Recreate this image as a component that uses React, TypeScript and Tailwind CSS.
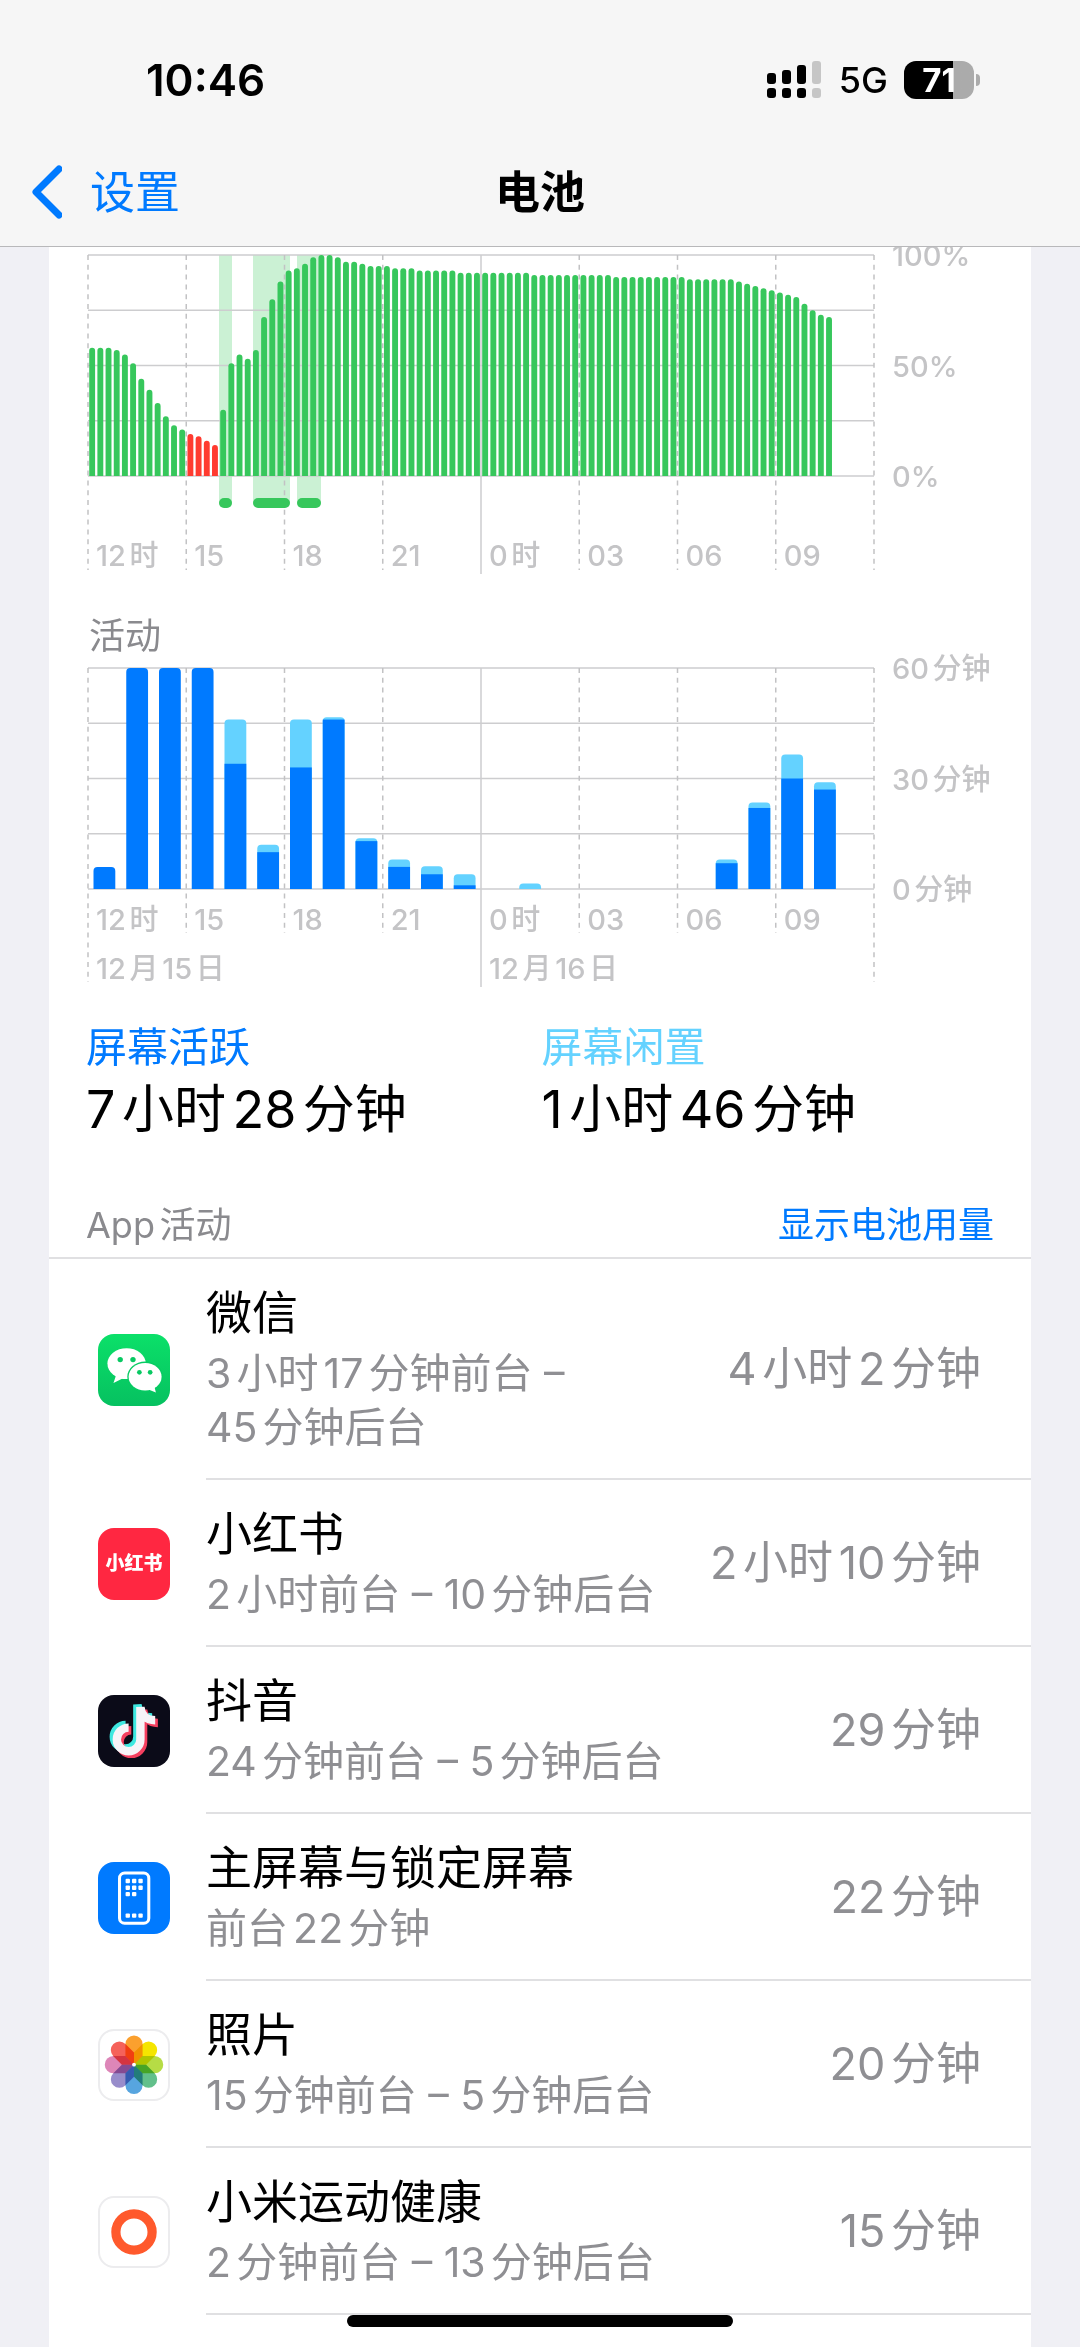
import type { ReactNode } from "react";

const batteryLevels = [
  58, 58, 58, 57, 55, 51, 44, 39, 33, 27, 23, 21, 19, 18, 16, 14, 30, 51, 55, 53, 57, 72, 80, 88,
  93, 94, 96, 99, 100, 100, 99, 97, 97, 96, 95, 95, 95, 94, 94, 94, 93, 93, 93, 93, 93, 92, 92, 92,
  92, 92, 92, 92, 92, 92, 91, 91, 91, 91, 91, 91, 91, 91, 91, 91, 90, 90, 90, 90, 90, 90, 90, 90,
  90, 89, 89, 89, 89, 89, 89, 88, 87, 86, 85, 84, 83, 82, 81, 78, 75, 73, 72
];

// start and width of each charging period, in chart units
const charging = [
  { x: 170, width: 13 },
  { x: 204, width: 37 },
  { x: 248, width: 24 }
];

// minutes per hour slot: total with the screen on, and the active part of it
const activity = [
  { hour: 0, total: 6, active: 6 },
  { hour: 1, total: 60, active: 60 },
  { hour: 2, total: 60, active: 60 },
  { hour: 3, total: 60, active: 60 },
  { hour: 4, total: 46, active: 34 },
  { hour: 5, total: 12, active: 10 },
  { hour: 6, total: 46, active: 33 },
  { hour: 7, total: 46.6, active: 46 },
  { hour: 8, total: 13.8, active: 13 },
  { hour: 9, total: 8, active: 6 },
  { hour: 10, total: 6.2, active: 4 },
  { hour: 11, total: 4, active: 1 },
  { hour: 13, total: 1.5, active: 0 },
  { hour: 19, total: 8, active: 7 },
  { hour: 20, total: 23.5, active: 22 },
  { hour: 21, total: 36.5, active: 30 },
  { hour: 22, total: 29, active: 27 }
];

const hourLabels = ["12时", "15", "18", "21", "0时", "03", "06", "09"];

const LEFT = 39;
const WIDTH = 786;
const HEIGHT = 221;
const TICK = WIDTH / 8;

function Grid({ top, tails }: { top: number; tails: number[] }) {
  return (
    <g strokeWidth="1.5">
      {[0, 1, 2, 3, 4].map((i) => (
        <line
          key={i}
          x1={LEFT}
          x2={LEFT + WIDTH}
          y1={top + (HEIGHT / 4) * i}
          y2={top + (HEIGHT / 4) * i}
          stroke="#cdcdcf"
        />
      ))}
      {tails.map((end, i) => (
        <line
          key={i}
          x1={LEFT + TICK * i}
          x2={LEFT + TICK * i}
          y1={top}
          y2={end}
          stroke={i === 4 ? "#cdcdcf" : "#c2c2c4"}
          strokeDasharray={i === 4 ? undefined : "5 4.8"}
        />
      ))}
    </g>
  );
}

function AxisLabels({ top, labels, hoursY }: { top: number; labels: string[]; hoursY: number }) {
  return (
    <g className="fill-[#c4c4c6] text-[29px] font-medium">
      {labels.map((label, i) => (
        <text key={label} x={LEFT + WIDTH + 18} y={top + (HEIGHT / 2) * i + 11}>
          {label}
        </text>
      ))}
      {hourLabels.map((label, i) => (
        <text key={label} x={LEFT + TICK * i + 8} y={hoursY}>
          {label}
        </text>
      ))}
    </g>
  );
}

function BatteryChart() {
  const top = 8;
  const bottom = top + HEIGHT;
  const step = WIDTH / 96;
  return (
    <svg viewBox="0 0 982 330" className="block w-full" role="img" aria-label="电池电量">
      {charging.map((c) => (
        <rect key={c.x} x={c.x} y={top} width={c.width} height={HEIGHT + 27} fill="#cbf1d4" />
      ))}
      <Grid top={top} tails={[323, 323, 323, 323, 327, 323, 323, 323, 323]} />
      {batteryLevels.map((level, i) => {
        const x = LEFT + step * i + 1.2;
        const y = bottom - (level / 100) * HEIGHT;
        return (
          <path
            key={i}
            d={`M${x} ${bottom}V${y + 3}a2.95 3 0 0 1 5.9 0V${bottom}z`}
            fill={level < 20 ? "#ff3b30" : "#37c75c"}
          />
        );
      })}
      {charging.map((c) => (
        <rect key={c.x} x={c.x} y={251} width={c.width} height={10} rx={5} fill="#37c75c" />
      ))}
      <AxisLabels top={top} labels={["100%", "50%", "0%"]} hoursY={319} />
    </svg>
  );
}

function ActivityChart() {
  const top = 8;
  const bottom = top + HEIGHT;
  const step = WIDTH / 24;
  return (
    <svg viewBox="0 0 982 329" className="block w-full overflow-visible" role="img" aria-label="活动">
      <Grid top={top} tails={[322, 273, 273, 273, 327, 273, 273, 273, 322]} />
      {activity.map((a) => {
        const x = LEFT + step * a.hour + 5.5;
        const y = bottom - (a.total / 60) * HEIGHT;
        const activeY = bottom - (a.active / 60) * HEIGHT;
        const full = a.total === a.active;
        return (
          <g key={a.hour}>
            <path
              d={`M${x} ${bottom}V${y + 4}q0 -4 4 -4h13.8q4 0 4 4V${bottom}z`}
              fill={full ? "#007aff" : "#64d2ff"}
            />
            {!full && <rect x={x} y={activeY} width={21.8} height={bottom - activeY} fill="#007aff" />}
          </g>
        );
      })}
      <AxisLabels top={top} labels={["60分钟", "30分钟", "0分钟"]} hoursY={270} />
      <g className="fill-[#c4c4c6] text-[29px] font-medium">
        <text x={LEFT + 8} y={319}>12月15日</text>
        <text x={LEFT + TICK * 4 + 8} y={319}>12月16日</text>
      </g>
    </svg>
  );
}

function WeChatIcon() {
  return (
    <svg viewBox="0 0 214 214" className="size-full">
      <defs>
        <linearGradient id="wechat" x1="0" y1="0" x2="0" y2="1">
          <stop offset="0" stopColor="#0be069" />
          <stop offset="1" stopColor="#06c160" />
        </linearGradient>
      </defs>
      <rect width="214" height="214" fill="url(#wechat)" />
      <ellipse cx="85" cy="88" rx="57" ry="46" fill="#fff" />
      <path d="M54 122L46 146L76 131z" fill="#fff" />
      <ellipse cx="140" cy="127" rx="53" ry="45" fill="#07cb63" />
      <ellipse cx="140" cy="127" rx="49" ry="41" fill="#fff" />
      <path d="M148 164L172 174L167 153z" fill="#fff" />
      <g fill="#08c962">
        <circle cx="66" cy="76" r="8" />
        <circle cx="104" cy="76" r="8" />
        <circle cx="123" cy="114" r="7" />
        <circle cx="155" cy="114" r="7" />
      </g>
    </svg>
  );
}

function DouyinIcon() {
  const note = "M91 97A35 35 0 1 0 126 132V36C128 58 144 75 170 75";
  return (
    <svg viewBox="0 0 214 214" className="size-full">
      <rect width="214" height="214" fill="#0b0b18" />
      <g fill="none" strokeWidth="25">
        <path d={note} stroke="#3ee8e0" transform="translate(-9 -8)" />
        <path d={note} stroke="#f43f5f" transform="translate(8 8)" />
        <path d={note} stroke="#f6f4f8" />
      </g>
    </svg>
  );
}

function HomeScreenIcon() {
  const dots = [
    [82, 50], [101, 50], [120, 50],
    [82, 70], [101, 70], [120, 70],
    [82, 89], [101, 89],
    [82, 153], [101, 153], [120, 153]
  ];
  return (
    <svg viewBox="0 0 214 214" className="size-full">
      <rect width="214" height="214" fill="#007aff" />
      <rect x="64" y="33" width="87" height="149" rx="15" fill="none" stroke="#fff" strokeWidth="9" />
      {dots.map(([x, y]) => (
        <rect key={`${x}-${y}`} x={x} y={y} width="13" height="13" rx="3" fill="#fff" />
      ))}
    </svg>
  );
}

function PhotosIcon() {
  const petals = ["#fba02e", "#f5e500", "#b6dc45", "#62c08b", "#57a5df", "#988dcb", "#dd86b8", "#f5625a"];
  return (
    <svg viewBox="0 0 214 214" className="size-full">
      <g className="isolate">
        {petals.map((color, i) => (
          <path
            key={color}
            d="M107 106L80 79V41a27 27 0 0 1 54 0V79z"
            transform={`rotate(${i * 45} 107 106)`}
            fill={color}
            className="mix-blend-multiply"
          />
        ))}
      </g>
      <circle cx="107" cy="106" r="6" fill="#fff" />
    </svg>
  );
}

function MiHealthIcon() {
  return (
    <svg viewBox="0 0 214 214" className="size-full">
      <circle cx="107" cy="107" r="57" fill="none" stroke="#ff592c" strokeWidth="29" />
    </svg>
  );
}

function XhsIcon() {
  return (
    <span className="flex size-full items-center justify-center bg-[#ff2741] text-[19px] font-black leading-none text-white">
      小红书
    </span>
  );
}

type AppUsage = { name: string; detail: string; time: string; icon: ReactNode; outlined?: boolean };

const apps: AppUsage[] = [
  { name: "微信", detail: "3小时17分钟前台 – 45分钟后台", time: "4小时2分钟", icon: <WeChatIcon /> },
  { name: "小红书", detail: "2小时前台 – 10分钟后台", time: "2小时10分钟", icon: <XhsIcon /> },
  { name: "抖音", detail: "24分钟前台 – 5分钟后台", time: "29分钟", icon: <DouyinIcon /> },
  { name: "主屏幕与锁定屏幕", detail: "前台22分钟", time: "22分钟", icon: <HomeScreenIcon /> },
  { name: "照片", detail: "15分钟前台 – 5分钟后台", time: "20分钟", icon: <PhotosIcon />, outlined: true },
  { name: "小米运动健康", detail: "2分钟前台 – 13分钟后台", time: "15分钟", icon: <MiHealthIcon />, outlined: true }
];

function StatusBar() {
  return (
    <div className="flex h-40 items-center justify-between pl-[146px] pr-[100px] text-black">
      <span className="text-[44px] font-semibold leading-none">10:46</span>
      <div className="flex items-center">
        <svg viewBox="0 0 54 38" className="h-[38px] w-[54px]" aria-hidden="true">
          <g fill="#000">
            <rect x="0" y="12" width="9" height="11" rx="3" />
            <rect x="15" y="9" width="9" height="14" rx="3" />
            <rect x="30" y="4" width="9" height="19" rx="3" />
            <rect x="0" y="27" width="9" height="10" rx="3" />
            <rect x="15" y="27" width="9" height="10" rx="3" />
            <rect x="30" y="27" width="9" height="10" rx="3" />
          </g>
          <g fill="#c6c6c6">
            <rect x="45" y="0" width="9" height="23" rx="3" />
            <rect x="45" y="27" width="9" height="10" rx="3" />
          </g>
        </svg>
        <span className="ml-[18px] text-[36px] font-medium leading-none">5G</span>
        <div className="ml-4 flex h-[38px] w-[70px] items-center justify-center rounded-xl bg-linear-to-r from-black from-70% to-[#ababab] to-70% text-[33px] font-bold leading-none text-white">
          71
        </div>
        <div className="ml-0.5 h-3 w-1 rounded-r-full bg-[#ababab]" />
      </div>
    </div>
  );
}

function AppRow({ app }: { app: AppUsage }) {
  return (
    <li className="flex items-stretch pl-[49px]">
      <div className="flex items-center pr-9">
        <div
          className={`size-[72px] overflow-hidden rounded-2xl ${app.outlined ? "border-2 border-[#ececee] bg-white" : ""}`}
        >
          {app.icon}
        </div>
      </div>
      <div className="flex flex-1 items-center justify-between gap-6 border-b-2 border-[#e0e0e2] py-6 pr-[50px]">
        <div>
          <h3 className="mb-1 text-[46px] leading-[59px] text-black">{app.name}</h3>
          <p className="break-keep text-[41px] leading-[54px] text-[#8f8f93]">{app.detail}</p>
        </div>
        <span className="shrink-0 text-[45px] leading-[59px] text-[#8f8f93]">{app.time}</span>
      </div>
    </li>
  );
}

export default function App() {
  return (
    <div className="relative flex min-h-screen flex-col bg-[#f0f0f5] font-['Inter','Noto_Sans_CJK_SC',sans-serif] [text-autospace:normal]">
      <header className="border-b border-[#b8b8ba] bg-[#f6f6f6] pb-[22px]">
        <StatusBar />
        <nav className="grid h-16 grid-cols-3 items-center px-8">
          <a href="#settings" className="flex items-center gap-7 text-[45px] leading-none text-[#007aff]">
            <svg viewBox="0 0 30 54" className="h-[54px] w-[30px]" aria-hidden="true">
              <path d="M27 4L4 27L27 50" fill="none" stroke="currentColor" strokeWidth="7" strokeLinecap="round" strokeLinejoin="round" />
            </svg>
            设置
          </a>
          <h1 className="text-center text-[45px] font-semibold leading-none text-black">电池</h1>
        </nav>
      </header>

      <main className="mx-[49px] flex-1 bg-white">
        <BatteryChart />
        <h2 className="mt-[35px] pl-10 text-[36px] leading-[48px] text-[#8a8a8e]">活动</h2>
        <ActivityChart />

        {/* Screen on / idle totals */}
        <dl className="mt-7 grid grid-cols-2 pl-[37px] pr-[34px]">
          <div>
            <dt className="text-[41px] leading-[60px] text-[#007aff]">屏幕活跃</dt>
            <dd className="text-[52px] leading-[66px] text-black">7小时28分钟</dd>
          </div>
          <div>
            <dt className="text-[41px] leading-[60px] text-[#64d2ff]">屏幕闲置</dt>
            <dd className="text-[52px] leading-[66px] text-black">1小时46分钟</dd>
          </div>
        </dl>

        {/* Usage by app */}
        <section className="mt-14">
          <div className="flex items-center justify-between border-b-2 border-[#e0e0e2] pb-1.5 pl-[37px] pr-[37px] text-[36px] leading-[52px]">
            <h2 className="text-[#8a8a8e]">App活动</h2>
            <button type="button" className="text-[#007aff]">显示电池用量</button>
          </div>
          <ul>
            {apps.map((app) => (
              <AppRow key={app.name} app={app} />
            ))}
          </ul>
        </section>
      </main>

      <div className="absolute bottom-5 left-1/2 h-3 w-[386px] -translate-x-1/2 rounded-full bg-black" />
    </div>
  );
}
